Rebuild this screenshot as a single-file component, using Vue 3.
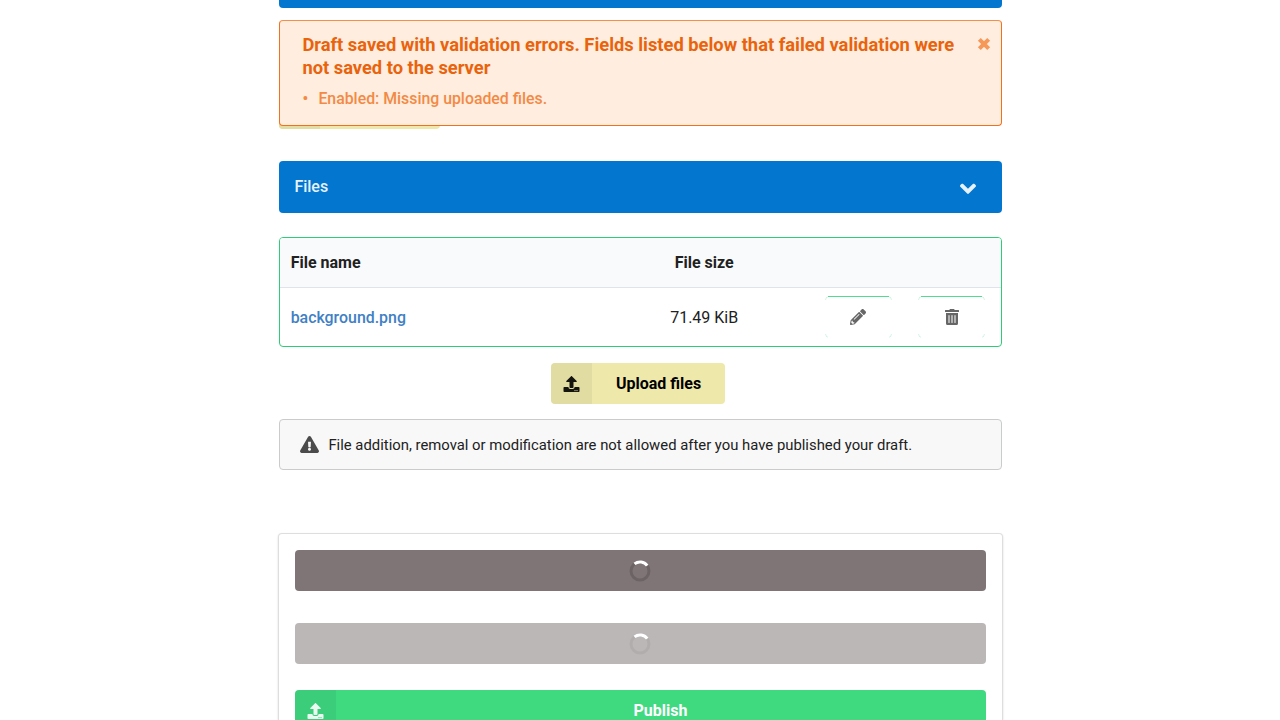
<script setup>
const files = [{ name: 'background.png', size: '71.49 KiB' }]
const errors = ['Enabled: Missing uploaded files.']
const icons = {
  angle: 'M143 352.3L7 216.3c-9.4-9.4-9.4-24.6 0-33.9l22.6-22.6c9.4-9.4 24.6-9.4 33.9 0l96.4 96.4 96.4-96.4c9.4-9.4 24.6-9.4 33.9 0l22.6 22.6c9.4 9.4 9.4 24.6 0 33.9l-136 136c-9.2 9.4-24.4 9.4-33.8 0z',
  pencil: 'M497.9 142.1l-46.1 46.1c-4.7 4.7-12.3 4.7-17 0l-111-111c-4.7-4.7-4.7-12.3 0-17l46.1-46.1c18.7-18.7 49.1-18.7 67.9 0l60.1 60.1c18.8 18.7 18.8 49.1 0 67.9zM284.2 99.8L21.6 362.4.4 483.9c-2.9 16.4 11.4 30.6 27.8 27.8l121.5-21.3 262.6-262.6c4.7-4.7 4.7-12.3 0-17l-111-111c-4.8-4.7-12.4-4.7-17.1 0zM124.1 339.9c-5.5-5.5-5.5-14.3 0-19.8l154-154c5.5-5.5 14.3-5.5 19.8 0s5.5 14.3 0 19.8l-154 154c-5.5 5.5-14.3 5.5-19.8 0zM88 424h48v36.3l-64.5 11.3-31.1-31.1L51.7 376H88v48z',
  trash: 'M32 464a48 48 0 0 0 48 48h288a48 48 0 0 0 48-48V128H32zm272-256a16 16 0 0 1 32 0v224a16 16 0 0 1-32 0zm-96 0a16 16 0 0 1 32 0v224a16 16 0 0 1-32 0zm-96 0a16 16 0 0 1 32 0v224a16 16 0 0 1-32 0zM432 32H312l-9.4-18.7A24 24 0 0 0 281.1 0H166.8a23.72 23.72 0 0 0-21.4 13.3L136 32H16A16 16 0 0 0 0 48v32a16 16 0 0 0 16 16h416a16 16 0 0 0 16-16V48a16 16 0 0 0-16-16z',
  upload: 'M296 384h-80c-13.3 0-24-10.7-24-24V192h-87.7c-17.8 0-26.7-21.5-14.1-34.1L242.3 5.7c7.5-7.5 19.8-7.5 27.3 0l152.2 152.2c12.6 12.6 3.7 34.1-14.1 34.1H320v168c0 13.3-10.7 24-24 24zm216-8v112c0 13.3-10.7 24-24 24H24c-13.3 0-24-10.7-24-24V376c0-13.3 10.7-24 24-24h136v8c0 30.9 25.1 56 56 56h80c30.9 0 56-25.1 56-56v-8h136c13.3 0 24 10.7 24 24zm-124 88c0-11-9-20-20-20s-20 9-20 20 9 20 20 20 20-9 20-20zm64 0c0-11-9-20-20-20s-20 9-20 20 9 20 20 20 20-9 20-20z',
  warning: 'M569.517 440.013C587.975 472.007 564.806 512 527.94 512H48.054c-36.937 0-59.999-40.055-41.577-71.987L246.423 23.985c18.467-32.009 64.72-31.951 83.154 0l239.94 416.028zM288 354c-25.405 0-46 20.595-46 46s20.595 46 46 46 46-20.595 46-46-20.595-46-46-46zm-43.673-165.346l7.418 136c.347 6.364 5.609 11.346 11.982 11.346h48.546c6.373 0 11.635-4.982 11.982-11.346l7.418-136c.375-6.874-5.098-12.654-11.982-12.654h-63.383c-6.884 0-12.356 5.78-11.981 12.654z',
}
</script>

<template>
  <main class="page">
    <div class="section-end"></div>
    <div class="covered-button"><span class="covered-icon"></span></div>

    <section class="alert">
      <div class="alert-body">
        <h2>Draft saved with validation errors. Fields listed below that failed validation were not saved to the server</h2>
        <ul>
          <li v-for="e in errors" :key="e">{{ e }}</li>
        </ul>
      </div>
      <svg class="close" viewBox="0 0 12 12"><path d="M2 2L10 10M10 2L2 10" /></svg>
    </section>

    <header class="section-title">
      <span>Files</span>
      <svg class="angle" viewBox="0 0 320 512"><path :d="icons.angle" /></svg>
    </header>

    <section class="table">
      <div class="row head">
        <span>File name</span><span class="size">File size</span>
      </div>
      <div v-for="f in files" :key="f.name" class="row">
        <a class="file-name">{{ f.name }}</a>
        <span class="size">{{ f.size }}</span>
        <button class="action"><svg viewBox="0 0 512 512" class="pencil"><path :d="icons.pencil" /></svg></button>
        <button class="action"><svg viewBox="0 0 448 512" class="trash"><path :d="icons.trash" /></svg></button>
      </div>
    </section>

    <button class="upload">
      <span class="side"><svg viewBox="0 0 512 512"><path :d="icons.upload" /></svg></span>
      <span class="label">Upload files</span>
    </button>

    <div class="note">
      <svg viewBox="0 0 576 512"><path :d="icons.warning" /></svg>
      <span>File addition, removal or modification are not allowed after you have published your draft.</span>
    </div>

    <section class="actions">
      <div class="loading dark">
        <svg viewBox="0 0 22 22"><circle cx="11" cy="11" r="9" class="ring" /><path d="M5.5 3.9A9 9 0 0 1 18.2 5.6" class="arc" /></svg>
      </div>
      <div class="loading light">
        <svg viewBox="0 0 22 22"><circle cx="11" cy="11" r="9" class="ring" /><path d="M5.5 3.9A9 9 0 0 1 18.2 5.6" class="arc" /></svg>
      </div>
      <button class="publish">
        <span class="side"><svg viewBox="0 0 512 512"><path :d="icons.upload" /></svg></span>
        <span class="label">Publish</span>
      </button>
    </section>
  </main>
</template>

<style>
body { background: #fff; overflow: hidden; }
</style>
<style scoped>
* { box-sizing: border-box; }
.page {
  position: relative; display: flex; flex-direction: column;
  width: 723px; height: 720px; margin-left: 279px;
  font-family: Roboto, "Liberation Sans", sans-serif; font-size: 16px; line-height: 20px;
  color: #212121;
}
.page > * { flex: none; }
button { font: inherit; padding: 0; border: 0; background: none; }
svg { display: block; fill: currentColor; flex: none; }
.section-end { height: 8px; background: #0377cf; border-radius: 0 0 4px 4px; }
.covered-button { width: 161px; height: 41px; margin-top: 80px; background: #eee8aa; border-radius: 4px; overflow: hidden; }
.covered-icon { display: block; width: 41px; height: 100%; background: #e2dda2; }
.alert {
  position: absolute; top: 20px; left: 0; width: 723px; height: 106px;
  display: flex; justify-content: space-between; padding: 12px 10.5px 0 22.4px;
  background: #ffeddf; border: 1px solid #f2711c; border-top-color: #f58f48; border-radius: 4px;
  color: #f28a45;
}
.alert-body { width: 662px; }
.alert h2 { margin: 0; font-size: 18.32px; line-height: 23px; font-weight: 700; color: #e9630c; }
.alert ul { list-style: none; margin: 10px 0 0; padding: 0; }
.alert li { display: flex; font-size: 15.85px; font-weight: 500; line-height: 20px; }
.alert li::before { content: "•"; width: 16px; font-weight: 700; }
.close { width: 14px; height: 14px; margin-top: 4px; color: #f69858; stroke: currentColor; stroke-width: 3.5; }
.section-title {
  display: flex; align-items: center; justify-content: space-between;
  height: 52px; margin-top: 32px; padding: 0 26px 0 15.4px;
  background: #0377cf; border-radius: 4px; color: #e8f2fa; font-weight: 500;
}
.angle { width: 16px; height: 25.6px; margin-top: 3px; }
.table { height: 110px; margin-top: 24px; border: 1px solid #2ecc78; border-radius: 4px; overflow: hidden; }
.row { display: grid; grid-template-columns: 354px 119px 1fr 67px 26px 67px 16px; align-items: center; height: 58px; padding-left: 10.7px; }
.row.head { height: 50px; background: #f9fafb; border-bottom: 1px solid #e0e3e7; font-weight: 700; }
.row:not(.head) > span, .file-name { padding-top: 2px; }
.size { text-align: center; }
.file-name { color: #3f80c5; font-size: 15.9px; font-weight: 500; }
.action { position: relative; display: flex; justify-content: center; align-items: center; height: 42px; padding-right: 1px; color: #666; background: linear-gradient(#52dc91, #52dc91) 50% 0 / 61px 1px no-repeat; }
.action::before {
  content: ""; position: absolute; inset: 0; border: 1px solid rgba(46, 204, 120, .22); border-radius: 4px;
  mask: linear-gradient(#000, #000) 0 0 / 3px 4px no-repeat, linear-gradient(#000, #000) 100% 0 / 3px 4px no-repeat,
    linear-gradient(#000, #000) 0 100% / 3px 4px no-repeat, linear-gradient(#000, #000) 100% 100% / 3px 4px no-repeat;
}
.action:nth-of-type(1) { grid-column: 4; }
.action:nth-of-type(2) { grid-column: 6; padding-right: 0; }
.pencil { width: 16px; height: 16px; }
.trash { width: 14px; height: 16px; }
.upload { display: flex; width: 174px; height: 41px; margin: 16px 0 0 272px; background: #eee8aa; border-radius: 4px; overflow: hidden; font-weight: 700; color: #000; }
.side { display: flex; align-items: center; justify-content: center; width: 41px; height: 41px; background: rgba(0, 0, 0, .05); }
.side svg { width: 17px; height: 16px; opacity: .9; }
.label { flex: 1; text-align: center; line-height: 41px; }
.note { display: flex; align-items: center; height: 51px; margin-top: 15px; padding-left: 20.4px; gap: 9px; border: 1px solid #cacbcb; border-radius: 4px; background: #f8f8f8; font-size: 14.85px; }
.note svg { width: 19px; height: 17px; color: #4b4b4b; }
.actions { width: 725px; height: 200px; margin: 63px 0 0 -1px; padding: 17px 17px 0; border-radius: 4px; box-shadow: 0 1px 2px 0 #d4d4d5, 0 0 0 1px #dededf inset; background: #fff; }
.loading { display: flex; align-items: center; justify-content: center; height: 41px; padding: 1px 1.5px 0 0; border-radius: 4px; }
.loading svg { width: 22px; height: 22px; fill: none; stroke-width: 3; }
.dark { background: #7f7576; }
.light { margin-top: 32px; background: #bcb7b7; }
.ring { stroke: rgba(0, 0, 0, .15); }
.light .ring { stroke: rgba(0, 0, 0, .05); }
.arc { stroke: #fff; }
.publish { display: flex; width: 100%; height: 41px; margin-top: 26px; border-radius: 4px; overflow: hidden; background: #3fd980; color: #fff; font-weight: 700; }
.publish .label { padding-right: 1px; }
</style>
